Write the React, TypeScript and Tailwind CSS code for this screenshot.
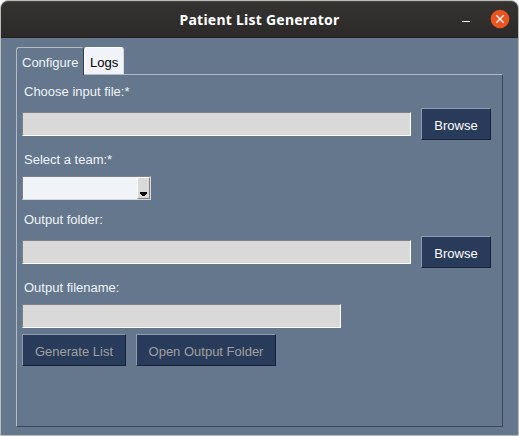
import React from "react";

type ButtonProps = { label: string; className: string; disabled?: boolean };

function Label({ text, className = "" }: { text: string; className?: string }) {
  return (
    <div className={`pl-[2px] h-4 leading-4 text-[#eff3f8] whitespace-nowrap ${className}`}>{text}</div>
  );
}

function Button({ label, className, disabled = false }: ButtonProps) {
  return (
    <button
      disabled={disabled}
      className={`flex h-8 items-center justify-center whitespace-nowrap border border-t-[#8f9bae] border-l-[#8f9bae] border-r-[#17223a] border-b-[#17223a] bg-[#283b5b] pt-[4px] leading-4 ${
        disabled ? "text-[#a0a0a0]" : "text-white"
      } ${className}`}
    >
      {label}
    </button>
  );
}

function Entry({ className }: { className: string }) {
  return (
    <input
      className={`block h-6 border border-t-[#828282] border-l-[#828282] border-r-white border-b-white bg-[#d9d9d9] px-1 text-black outline-none ${className}`}
    />
  );
}

function TeamSelect() {
  return (
    <div className="mt-2 flex h-6 w-[129px] border border-t-[#828282] border-l-[#828282] border-r-[#d9d9d9] border-b-[#d9d9d9] bg-[#f0f3f7]">
      <div className="flex-1" />
      <div className="flex w-[13px] items-end justify-center border border-t-white border-l-white border-r-[#828282] border-b-[#828282] bg-[#d9d9d9] pb-[2px]">
        <svg width="7" height="4" viewBox="0 0 7 4" shapeRendering="crispEdges">
          <path d="M0 0H7V2H6V3H5V4H2V3H1V2H0Z" fill="#000" />
        </svg>
      </div>
    </div>
  );
}

function TitleBar() {
  return (
    <header className="relative flex h-[37px] items-center justify-center rounded-t-[7px] border-t border-b border-t-[#454540] border-b-[#222120] bg-gradient-to-b from-[#343331] to-[#2c2a29]">
      <h1 className="whitespace-nowrap font-['Noto_Sans',sans-serif] text-[14px] font-bold leading-5 tracking-[0.24px] text-white">
        Patient List Generator
      </h1>
      <div className="absolute right-[8px] top-[7px] flex items-center">
        <svg width="9" height="20" viewBox="0 0 9 20" className="mr-[20px]" shapeRendering="crispEdges">
          <path d="M0.5 12H8.5V13H0.5Z" fill="#fff" />
        </svg>
        <svg width="20" height="20" viewBox="0 0 20 20">
          <circle cx="10" cy="10" r="9.3" fill="#e95420" />
          <path d="M6.3 6.3L13.7 13.7M13.7 6.3L6.3 13.7" stroke="#fff" strokeWidth="1.3" />
        </svg>
      </div>
    </header>
  );
}

export default function App() {
  return (
    <div className="h-[436px] w-[519px] overflow-hidden bg-white">
      <main className="flex h-full w-full flex-col overflow-hidden rounded-t-[8px] border border-[#bcbbb7] bg-[#64778d] font-['Liberation_Sans',Arial,sans-serif] text-[13px]">
        <TitleBar />
        <div className="px-[15px] pt-[9px]">
          <nav className="flex h-[27px]">
            <div className="z-10 h-[28px] w-[68px] rounded-t-[3px] border border-b-0 border-t-[#b2bbc6] border-l-[#b2bbc6] border-r-[#323c47] bg-[#64778d] pl-[5px] pt-[7px] leading-4 text-[#eff3f8]">
              Configure
            </div>
            <div className="h-[27px] w-10 rounded-t-[3px] border border-b-0 border-t-white border-l-white border-r-[#d9d9d9] bg-[#f0f3f7] pl-[5px] pt-[7px] leading-4 text-black">
              Logs
            </div>
          </nav>
          <section className="h-[353px] w-[487px] border border-t-[#b2bbc6] border-l-[#b2bbc6] border-r-[#3c4855] border-b-[#3c4855] pl-[5px] pt-[9px]">
            <Label text="Choose input file:*" />
            <div className="mt-2 flex items-center gap-[10px]">
              <Entry className="w-[389px]" />
              <Button label="Browse" className="w-[70px]" />
            </div>
            <Label text="Select a team:*" className="mt-3" />
            <TeamSelect />
            <Label text="Output folder:" className="mt-[12px]" />
            <div className="mt-2 flex items-center gap-[10px]">
              <Entry className="w-[389px]" />
              <Button label="Browse" className="w-[70px]" />
            </div>
            <Label text="Output filename:" className="mt-3" />
            <Entry className="mt-2 w-[319px]" />
            <div className="mt-[6px] flex gap-[10px]">
              <Button label="Generate List" className="w-[104px]" disabled />
              <Button label="Open Output Folder" className="w-[140px]" disabled />
            </div>
          </section>
        </div>
      </main>
    </div>
  );
}
